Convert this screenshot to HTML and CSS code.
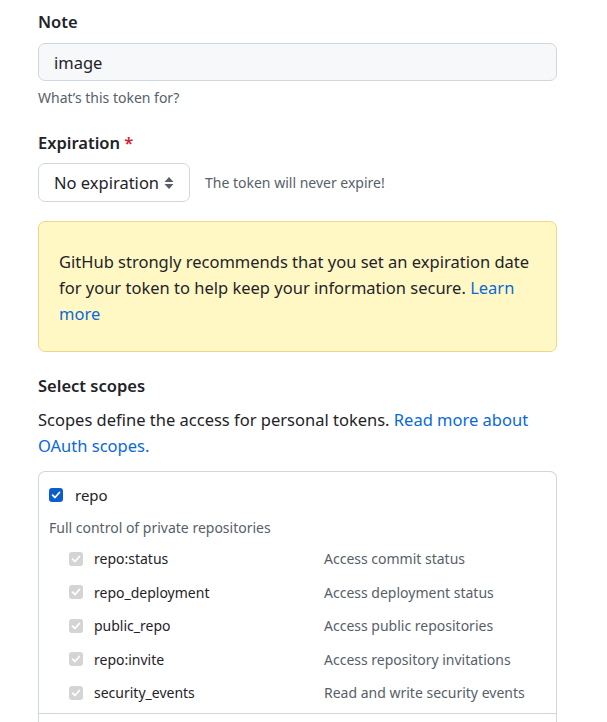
FILE: index.html
```html
<!DOCTYPE html>
<html>
<head>
<meta charset="utf-8">
<link rel="stylesheet" href="styles.css">
</head>
<body>
<div class="page">
  <div class="group">
    <div class="label">Note</div>
    <div class="input">image</div>
    <div class="note">What’s this token for?</div>
  </div>
  <div class="group exp">
    <div class="label">Expiration <span class="req">*</span></div>
    <div class="exp-row">
      <div class="select">No expiration
        <svg class="caret" width="10" height="14" viewBox="0 0 10 14"><path d="M5 1 L9.5 6 H0.5 Z M5 13 L9.5 8 H0.5 Z" fill="#57606a"/></svg>
      </div>
      <span class="exp-note">The token will never expire!</span>
    </div>
  </div>
  <div class="flash">GitHub strongly recommends that you set an expiration date for your token to help keep your information secure. <a>Learn more</a></div>
  <div class="label scopes-title">Select scopes</div>
  <p class="scopes-desc">Scopes define the access for personal tokens. <a>Read more about OAuth scopes.</a></p>
  <div class="scopes">
    <div class="scope-main">
      <span class="cb checked"><svg width="10" height="10" viewBox="0 0 10 10"><path d="M1.6 5.2 L4 7.5 L8.4 2.5" stroke="#fff" stroke-width="1.8" fill="none" stroke-linecap="round" stroke-linejoin="round"/></svg></span>
      <span class="scope-name">repo</span>
    </div>
    <div class="scope-desc">Full control of private repositories</div>
    <div class="subs">
      <div class="sub"><span class="sub-name"><span class="cb dis"><svg width="10" height="10" viewBox="0 0 10 10"><path d="M1.6 5.2 L4 7.5 L8.4 2.5" stroke="#fff" stroke-width="1.8" fill="none" stroke-linecap="round" stroke-linejoin="round"/></svg></span>repo:status</span><span class="sub-desc">Access commit status</span></div>
      <div class="sub"><span class="sub-name"><span class="cb dis"><svg width="10" height="10" viewBox="0 0 10 10"><path d="M1.6 5.2 L4 7.5 L8.4 2.5" stroke="#fff" stroke-width="1.8" fill="none" stroke-linecap="round" stroke-linejoin="round"/></svg></span>repo_deployment</span><span class="sub-desc">Access deployment status</span></div>
      <div class="sub"><span class="sub-name"><span class="cb dis"><svg width="10" height="10" viewBox="0 0 10 10"><path d="M1.6 5.2 L4 7.5 L8.4 2.5" stroke="#fff" stroke-width="1.8" fill="none" stroke-linecap="round" stroke-linejoin="round"/></svg></span>public_repo</span><span class="sub-desc">Access public repositories</span></div>
      <div class="sub"><span class="sub-name"><span class="cb dis"><svg width="10" height="10" viewBox="0 0 10 10"><path d="M1.6 5.2 L4 7.5 L8.4 2.5" stroke="#fff" stroke-width="1.8" fill="none" stroke-linecap="round" stroke-linejoin="round"/></svg></span>repo:invite</span><span class="sub-desc">Access repository invitations</span></div>
      <div class="sub"><span class="sub-name"><span class="cb dis"><svg width="10" height="10" viewBox="0 0 10 10"><path d="M1.6 5.2 L4 7.5 L8.4 2.5" stroke="#fff" stroke-width="1.8" fill="none" stroke-linecap="round" stroke-linejoin="round"/></svg></span>security_events</span><span class="sub-desc">Read and write security events</span></div>
    </div>
    <div class="divider"></div>
  </div>
</div>
</body>
</html>
```
FILE: styles.css
```css
html, body { margin: 0; padding: 0; background: #fff; }
body {
  font-family: "Noto Sans", "Open Sans", sans-serif;
  color: #1f2328;
  font-size: 16px;
  overflow: hidden;
}
.page { padding: 8px 50px 0 38px; width: 519px; }
.label { font-weight: 600; font-size: 16.5px; line-height: 28px; }
.req { color: #cf222e; }
.group { display: flex; flex-direction: column; }
.input {
  margin-top: 7px;
  height: 36px;
  border: 1px solid #d0d7de;
  border-radius: 7px;
  background: #f6f8fa;
  padding: 0 15px;
  display: flex; align-items: center;
  font-size: 16.5px;
}
.note { font-size: 14px; color: #57606a; margin-top: 6px; line-height: 22px; }
.exp { margin-top: 20px; }
.exp-row { display: flex; align-items: center; margin-top: 6px; gap: 15px; }
.select {
  width: 120px; height: 37px;
  border: 1px solid #d0d7de; border-radius: 7px;
  padding: 0 15px; display: flex; align-items: center; justify-content: space-between;
  font-size: 16.5px;
}
.exp-note { font-size: 14px; color: #57606a; }
.flash {
  margin-top: 19px;
  background: #fff8c5;
  border: 1px solid #ecd88d;
  border-radius: 7px;
  padding: 27px 20px 24px 20px;
  font-size: 16.5px; line-height: 26px;
}
a { color: #0969da; }
.scopes-title { margin-top: 20px; }
.scopes-desc { margin: 7px 0 12px; font-size: 16.5px; line-height: 26px; }
.scopes {
  border: 1px solid #d0d7de; border-bottom: none;
  border-radius: 7px 7px 0 0;
  padding: 12px 10px 0 10px;
  height: 260px;
}
.cb { width: 14px; height: 14px; border-radius: 3px; display: inline-flex; align-items: center; justify-content: center; flex: none; }
.cb.checked { background: #0b5fcc; }
.cb.dis { background: #d4d4d4; }
.scope-main { display: flex; align-items: center; gap: 12px; font-size: 15px; line-height: 22px; }
.scope-desc { font-size: 14px; color: #57606a; margin-top: 11px; line-height: 22px; }
.subs { padding-left: 20px; margin-top: 3px; }
.sub { display: flex; font-size: 14px; height: 33.5px; align-items: center; color: #1f2328; }
.sub-name { width: 255px; display: flex; align-items: center; gap: 11px; }
.sub-desc { color: #57606a; }
.divider { border-top: 1px solid #d0d7de; margin: 3px -10px 0; }
```
